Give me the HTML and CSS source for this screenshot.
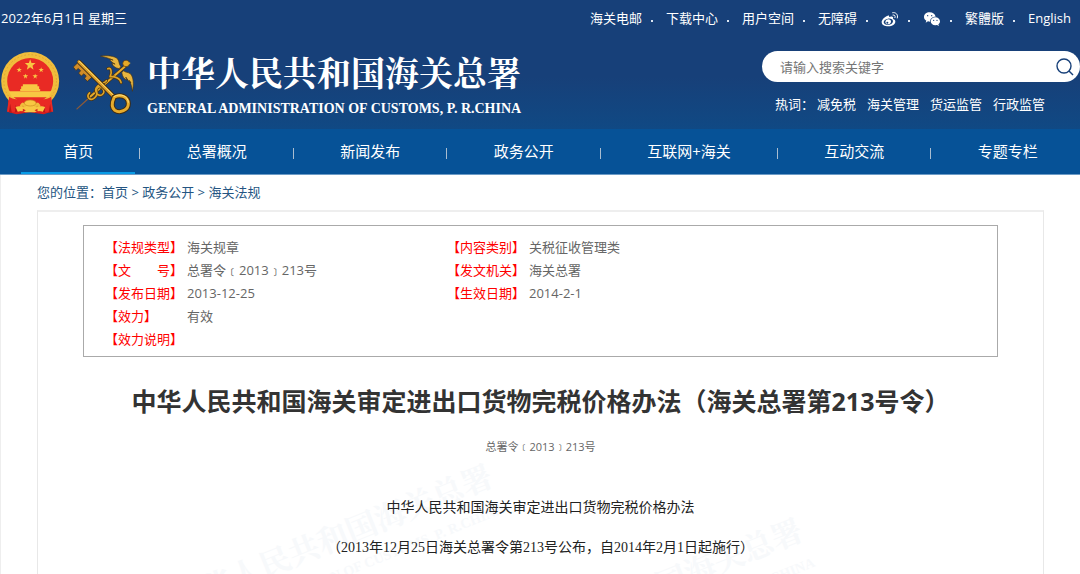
FILE: index.html
```html
<!DOCTYPE html>
<html lang="zh-CN">
<head>
<meta charset="utf-8">
<title>中华人民共和国海关总署</title>
<link rel="stylesheet" href="styles.css">
</head>
<body>
<header class="header">
  <div class="topbar">
    <span class="date">2022年6月1日 星期三</span>
    <ul class="toplinks">
      <li><a href="#">海关电邮</a></li>
      <li><a href="#">下载中心</a></li>
      <li><a href="#">用户空间</a></li>
      <li><a href="#">无障碍</a></li>
      <li><a href="#" aria-label="微博"><svg class="social" viewBox="0 0 54 48">
        <path fill="#fff" fill-rule="evenodd" d="M20 14C10 17 2 27 2 33c0 9 9 13 20 13 12 0 21-7 21-14 0-5-4-7-7-8 1-4 1-6-2-7-3-2-7 0-10 1 1-4 0-6-4-4zM21 23c8-1 15 2 15 8s-6 10-14 11c-8 0-14-3-14-8 0-6 6-10 13-11z"/>
        <path fill="#fff" fill-rule="evenodd" d="M22 25c5 0 9 3 8 8-1 4-5 7-9 7s-8-3-8-7c1-5 4-8 9-8zm-3 7a3 3 0 1 0 .1 6 3 3 0 0 0-.1-6z"/>
        <path fill="none" stroke="#fff" stroke-width="3" stroke-linecap="round" d="M35 5c10-2 17 6 14 16M36 12c5-1 8 3 6 8"/>
      </svg></a></li>
      <li><a href="#" aria-label="微信"><svg class="social" viewBox="0 0 54 48">
        <path fill="#fff" d="M20 4C10 4 3 10 3 18c0 5 3 9 7 11l-2 6 7-4c2 1 4 1 6 1 0-9 7-15 17-15C36 9 29 4 20 4z"/>
        <path fill="#fff" d="M37 19c-8 0-14 5-14 12s6 12 14 12l5-1 6 3-2-5c3-2 5-5 5-9 0-7-6-12-14-12z"/>
        <g fill="#174079"><circle cx="14" cy="14" r="2"/><circle cx="26" cy="14" r="2"/><circle cx="32" cy="28" r="2"/><circle cx="42" cy="28" r="2"/></g>
      </svg></a></li>
      <li><a href="#">繁體版</a></li>
      <li><a href="#">English</a></li>
    </ul>
  </div>
  <div class="brandbar">
    <a class="brand" href="#">
      <svg class="emblem" viewBox="2 150 182 192" aria-hidden="true">
        <path fill="#d81e1c" d="M28 286l-5 46 28 8 40-6 42 6 27-10-6-44z"/>
        <circle cx="92" cy="240" r="87" fill="#f0bd3c"/>
        <circle cx="92" cy="240" r="79" fill="none" stroke="#e0a530" stroke-width="3" stroke-dasharray="5 6"/>
        <circle cx="92" cy="240" r="69" fill="#e92a24"/>
        <path fill="#f8c843" d="M92 175l4 11h12l-9 8 3 12-10-7-10 7 3-12-9-8h12z"/>
        <path fill="#f8c843" d="M59 199l2 5h6l-5 4 2 6-5-4-5 4 2-6-5-4h6zM125 199l2 5h6l-5 4 2 6-5-4-5 4 2-6-5-4h6zM78 218l2 5h6l-5 4 2 6-5-4-5 4 2-6-5-4h6zM107 218l2 5h6l-5 4 2 6-5-4-5 4 2-6-5-4h6z"/>
        <path fill="#f8c843" d="M70 250h44v6h5v8h-54v-8h5zM62 264h60v6H62zM28 271h128l-8 18H37z"/>
        <path fill="#e92a24" d="M29 287c12 10 32 5 42 14l-10 12 8 20-46-1zM155 287c-12 10-32 5-42 14l10 12-8 20 46-1z"/>
        <path fill="#b91718" d="M32 308l5 28-9-3zM152 308l-5 28 9-3zM49 311l5 22-8 1zM134 311l-5 22 8 1z"/>
        <path fill="#f8c843" d="M48 318c10-4 18-2 25 2l8-6h22l8 6c8-4 17-6 26-2l-7 14c-8-3-17-2-24 2H78c-8-4-15-5-23-2z"/>
        <ellipse cx="92" cy="306" rx="18" ry="9" fill="#f8c843" stroke="#c88b20" stroke-width="2"/>
        <path fill="#d3271e" d="M70 323l9 5-9 5zM114 323l-9 5 9 5z"/>
      </svg>
      <svg class="keys" viewBox="215 160 190 186" aria-hidden="true">
        <g fill="none" stroke-linecap="round" stroke-linejoin="round">
          <path stroke="#8d5a38" stroke-width="4" d="M230 325l38-34"/>
          <path stroke="#4b3210" stroke-width="10" d="M268 290L374 198"/>
          <path stroke="#e5ab2b" stroke-width="6" d="M268 290L374 198"/>
          <path stroke="#4b3210" stroke-width="9" d="M268 277c-12 12 2 26 15 15 17-15-2-23 10-32 12-7 26 14 13 22-14 8-26-12-15-24 12-14 21-8 28-18M323 204c9-6 14 10 7 24 16-1 31 6 33 18"/>
          <path stroke="#dca328" stroke-width="5" d="M268 277c-12 12 2 26 15 15 17-15-2-23 10-32 12-7 26 14 13 22-14 8-26-12-15-24 12-14 21-8 28-18M323 204c9-6 14 10 7 24 16-1 31 6 33 18"/>
        </g>
        <path fill="#e8b640" stroke="#4a3410" stroke-width="2" d="M301 166c20-3 43-1 52 9 5 7 3 15 9 22l-4 7c-13-2-20-8-23-17l10 3c-9-5-14-9-16-15l10 3c-13-6-24-9-38-12zM397 272c5-20 4-43-6-53-7-5-15-3-20-9l-6 5c2 13 7 20 16 23l-4-9c6 8 10 14 16 18l-5-8c5 10 8 21 9 33z"/>
        <circle cx="378" cy="188" r="10" fill="#e7aa28" stroke="#4a3410" stroke-width="2"/>
        <path fill="#e2ad31" d="M385 184l7 3-8 6z"/>
        <path fill="#d18c28" stroke="#3c2b15" stroke-width="2" d="M233 185l-14 14 8 10 7-6 7 7-6 7 8 9 8-7 7 7-5 7 8 9 16-14z"/>
        <g fill="none" stroke-linecap="round">
          <path stroke="#3e2b13" stroke-width="14" d="M237 184l105 105"/>
          <path stroke="#dfa02a" stroke-width="9" d="M236 183l105 105"/>
          <path stroke="#ffe071" stroke-width="3" d="M237 181l103 103"/>
          <path stroke="#3e2b13" stroke-width="15" d="M342 290c17-10 42-3 43 19 0 21-26 30-41 20-13-10-8-25-2-39z"/>
          <path stroke="#e7ac2d" stroke-width="9" d="M342 290c17-10 42-3 43 19 0 21-26 30-41 20-13-10-8-25-2-39z"/>
          <path stroke="#ffe383" stroke-width="3" d="M343 287c17-10 41-2 42 18"/>
        </g>
      </svg>
      <span class="brandname">
        <span class="zh">中华人民共和国海关总署</span>
        <span class="en">GENERAL ADMINISTRATION OF CUSTOMS, P. R.CHINA</span>
      </span>
    </a>
    <div class="tools">
      <form class="search">
        <input type="text" placeholder="请输入搜索关键字" aria-label="搜索">
        <button type="button" aria-label="搜索"><svg viewBox="0 0 18 18"><circle cx="8" cy="8" r="7" /><path d="M13 13l4 4"/></svg></button>
      </form>
      <div class="hot"><span class="hotlabel">热词：</span><a href="#">减免税</a><a href="#">海关管理</a><a href="#">货运监管</a><a href="#">行政监管</a></div>
    </div>
  </div>
</header>
<nav class="nav">
  <a class="active" href="#">首页</a><i></i>
  <a href="#">总署概况</a><i></i>
  <a href="#">新闻发布</a><i></i>
  <a href="#">政务公开</a><i></i>
  <a href="#">互联网+海关</a><i></i>
  <a href="#">互动交流</a><i></i>
  <a href="#">专题专栏</a>
</nav>
<main class="page">
  <div class="crumbs">您的位置：<a href="#">首页</a> &gt; <a href="#">政务公开</a> &gt; <a href="#">海关法规</a></div>
  <article class="article">
    <svg class="watermark" aria-hidden="true">
      <g transform="translate(457 273) rotate(-22)"><text class="wm-zh" text-anchor="end">中华人民共和国海关总署</text><text class="wm-en" y="29" text-anchor="end">GENERAL ADMINISTRATION OF CUSTOMS, P. R.CHINA</text></g>
      <g transform="translate(767 327) rotate(-22)"><text class="wm-zh" text-anchor="end">中华人民共和国海关总署</text><text class="wm-en" y="29" text-anchor="end">GENERAL ADMINISTRATION OF CUSTOMS, P. R.CHINA</text></g>
    </svg>
    <div class="info">
      <table>
        <tr><th>【法规类型】</th><td class="wide">海关规章</td><th>【内容类别】</th><td>关税征收管理类</td></tr>
        <tr><th>【文　　号】</th><td class="wide">总署令﹝2013﹞213号</td><th>【发文机关】</th><td>海关总署</td></tr>
        <tr><th>【发布日期】</th><td class="wide">2013-12-25</td><th>【生效日期】</th><td>2014-2-1</td></tr>
        <tr><th>【效力】</th><td class="wide">有效</td><th></th><td></td></tr>
        <tr><th>【效力说明】</th><td class="wide"></td><th></th><td></td></tr>
      </table>
    </div>
    <h1>中华人民共和国海关审定进出口货物完税价格办法（海关总署第213号令）</h1>
    <p class="docno">总署令﹝2013﹞213号</p>
    <div class="text">
      <p>中华人民共和国海关审定进出口货物完税价格办法</p>
      <p>（2013年12月25日海关总署令第213号公布，自2014年2月1日起施行）</p>
    </div>
  </article>
</main>
</body>
</html>
```
FILE: styles.css
```css
* { box-sizing: border-box; }
body {
  margin: 0;
  min-height: 100vh;
  display: flex;
  flex-direction: column;
  background: #fff;
  color: #666;
  font: 13px/20px "Open Sans", "Noto Sans CJK SC", sans-serif;
}
a { color: inherit; text-decoration: none; }

.header {
  height: 129px;
  color: #fff;
  background: linear-gradient(#174079 0, #174079 60%, #104984 100%);
}
.topbar {
  display: flex;
  justify-content: space-between;
  padding: 8px 9px 0 1px;
}
.toplinks {
  display: flex;
  margin: 0;
  padding: 0;
  list-style: none;
}
.toplinks li { display: flex; align-items: center; }
.toplinks li + li::before {
  content: "";
  width: 2px;
  height: 2px;
  margin: 6px 13px 0 9px;
  background: #dce6f2;
}
.social { display: block; width: 18px; height: 16px; margin-top: 2px; }

.brandbar {
  display: flex;
  justify-content: space-between;
  padding-top: 23px;
}
.brand { display: flex; align-items: flex-start; }
.emblem { width: 61px; height: 64px; }
.keys { width: 63px; height: 62px; margin: 3px 0 0 11px; }
.brandname { display: flex; flex-direction: column; margin-left: 12px; white-space: nowrap; }
.zh {
  font: 700 34px/42px "Noto Serif CJK SC", "Noto Sans CJK SC", serif;
}
.en { font: 700 14px/20px "Liberation Serif", serif; margin-top: 6px; }

.tools { width: 318px; }
.search {
  display: flex;
  align-items: center;
  height: 31px;
  padding: 0 6px 0 18px;
  border-radius: 16px;
  background: #fff;
}
.search input {
  flex: 1;
  min-width: 0;
  padding: 0;
  border: 0;
  outline: 0;
  background: none;
  font: inherit;
}
.search input::placeholder { color: #757575; }
.search button { display: flex; padding: 0; border: 0; background: none; }
.search svg {
  width: 18px;
  height: 18px;
  fill: none;
  stroke: #174079;
  stroke-width: 1.4;
}
.hot { display: flex; gap: 11px; padding: 12px 0 0 13px; }
.hotlabel { margin-right: -8px; }

.nav {
  display: flex;
  height: 46px;
  padding-left: 21px;
  color: #fff;
  background: #065297;
  border-bottom: 1px solid #6c9bc6;
  font-size: 15px;
  line-height: 44px;
}
.nav a { flex: 1 1 auto; text-align: center; }
.nav .active { border-bottom: 2px solid #089be6; }
.nav i { width: 9px; }
.nav i::before {
  content: "";
  display: block;
  width: 1px;
  height: 11px;
  margin: 19px auto 0;
  background: #a9bdd0;
}

.page {
  flex: 1;
  display: flex;
  flex-direction: column;
  padding: 0 36px;
  border-left: 1px solid #eee;
}
.crumbs { padding: 7px 0 8px; color: #245582; }
.article {
  position: relative;
  flex: 1;
  padding: 13px 45px 0;
  border: solid #e8e8e8;
  border-top-color: #eee;
  border-width: 2px 1px 0;
  text-align: center;
}
.watermark {
  position: absolute;
  inset: 0;
  width: 100%;
  height: 100%;
  z-index: -1;
  fill: #f7f9fb;
}
.wm-zh { font: 700 31px "Noto Serif CJK SC", "Noto Sans CJK SC", serif; }
.wm-en { font: 700 14px "Liberation Serif", serif; }
.info {
  padding: 10px 0 5px 21px;
  border: 1px solid #aaa;
}
.info table { width: 100%; border-spacing: 0; table-layout: fixed; text-align: left; }
.info th, .info td { height: 23px; padding: 0; line-height: 23px; white-space: nowrap; }
.info th { width: 82px; color: #f00; font-weight: 400; }
.info .wide { width: 260px; }
h1 {
  margin: 27px 0 0;
  color: #333;
  font-size: 25px;
  line-height: 34px;
}
.docno { margin: 19px 0 0; font-size: 11px; line-height: 20px; }
.text {
  margin-top: 31px;
  color: #222;
  font: 14px/40px "Liberation Serif", "Noto Sans CJK SC", serif;
}
.text p { margin: 0; }
```
